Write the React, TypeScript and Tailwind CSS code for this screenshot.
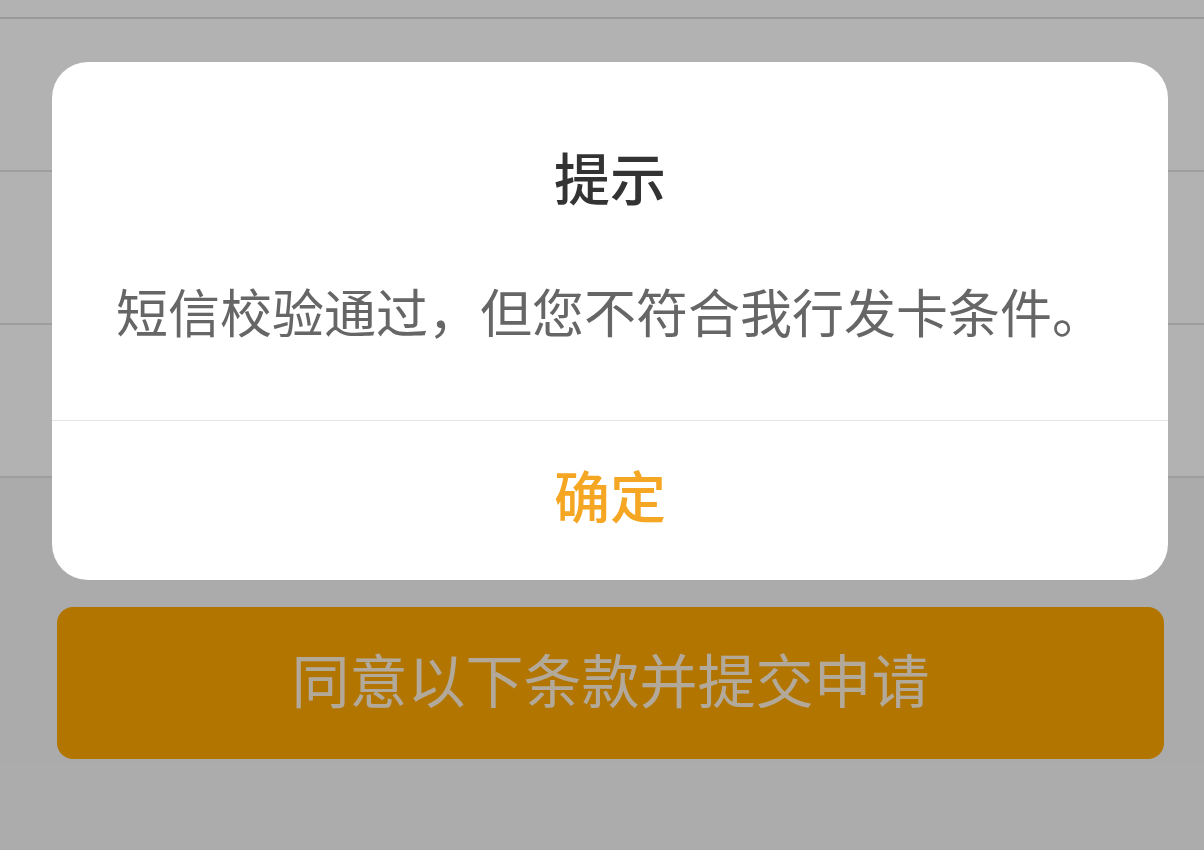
const rows = [0, 1, 2];

const App = () => {
  return (
    <div
      className="relative h-[850px] w-[1204px] overflow-hidden bg-[#f5f5f5]"
      style={{ fontFamily: '"Noto Sans CJK SC", "Noto Sans", sans-serif' }}
    >
      {/* page behind the dialog */}
      <div className="h-[19px] border-b-2 border-[#dcdcdc] bg-white" />
      {rows.map((r) => (
        <div key={r} className="h-[153px] border-b-2 border-[#e3e3e3] bg-white" />
      ))}
      <div className="pl-[57px] pr-[40px] pt-[129px]">
        <button className="flex h-[152px] w-full items-center justify-center rounded-[16px] bg-[#ffa900] pb-[10px] text-[58px] leading-none text-[#fff3dd]">
          同意以下条款并提交申请
        </button>
      </div>

      {/* mask */}
      <div className="absolute inset-0 bg-black/30" />

      {/* dialog */}
      <div className="absolute left-[52px] top-[62px] flex h-[518px] w-[1116px] flex-col overflow-hidden rounded-[36px] bg-white">
        <div className="flex flex-col items-center pb-[83px] pt-[86px]">
          <h2 className="text-[56px] font-medium leading-[56px] text-[#333333]">提示</h2>
          <p className="mt-[81px] text-[52px] leading-[52px] text-[#666666]">
            短信校验通过，但您不符合我行发卡条件。
          </p>
        </div>
        <div className="h-px bg-[#e5e5e5]" />
        <button className="flex flex-1 items-center justify-center pb-[14px] text-[56px] font-medium leading-none text-[#f5a623]">
          确定
        </button>
      </div>
    </div>
  );
};

export default App;
